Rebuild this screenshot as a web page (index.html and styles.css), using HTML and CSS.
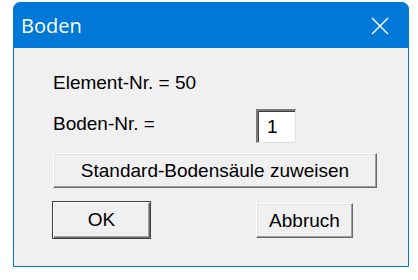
FILE: index.html
```html
<!DOCTYPE html>
<html lang="de">
<head>
  <meta charset="UTF-8">
  <title>Boden</title>
  <link rel="stylesheet" href="styles.css">
</head>
<body>
  <div class="window">
    <div class="title-bar">
      <span class="title">Boden</span>
      <svg class="close-icon" viewBox="0 0 18 18" width="18" height="18">
        <line x1="1" y1="1" x2="17" y2="17" stroke="#fff" stroke-width="1.5"/>
        <line x1="17" y1="1" x2="1" y2="17" stroke="#fff" stroke-width="1.5"/>
      </svg>
    </div>

    <div class="content">
      <div class="info-line">Element-Nr. = 50</div>

      <div class="field-row">
        <span class="field-label">Boden-Nr. =</span>
        <span class="field-input">1</span>
      </div>

      <button class="win-button wide-button">Standard-Bodensäule zuweisen</button>

      <div class="button-row">
        <button class="win-button default-button">OK</button>
        <button class="win-button cancel-button">Abbruch</button>
      </div>
    </div>
  </div>
</body>
</html>
```

FILE: styles.css
```css
body {
  margin: 0;
  padding: 0;
  background: #fff;
  font-family: 'Liberation Sans', Arial, sans-serif;
}

.window {
  margin: 2px 0 0 13px;
  width: 394px;
  border: 1px solid #0078d7;
  border-radius: 7px 7px 0 0;
  background: #0078d7;
}

.title-bar {
  height: 45px;
  display: flex;
  align-items: center;
  justify-content: space-between;
  padding: 0 19px 0 7px;
  border-radius: 7px 7px 0 0;
}

.title {
  font-family: 'Open Sans', 'Noto Sans', sans-serif;
  font-size: 20px;
  color: #fff;
}

.close-icon {
  display: block;
  margin-top: 1px;
}

.content {
  height: 218px;
  box-sizing: border-box;
  background: #f0f0f0;
  padding: 24px 0 0 39px;
  font-size: 19px;
  color: #000;
}

.info-line {
  line-height: 22px;
}

.field-row {
  display: flex;
  align-items: flex-start;
  margin-top: 15px;
  height: 34px;
}

.field-label {
  width: 203px;
  line-height: 22px;
  margin-top: 4px;
}

.field-input {
  width: 40px;
  height: 34px;
  box-sizing: border-box;
  background: #fff;
  border-top: 2px solid #7a7a7a;
  border-left: 2px solid #7a7a7a;
  border-right: 1px solid #e3e3e3;
  border-bottom: 1px solid #e3e3e3;
  box-shadow: inset 1px 1px #404040;
  padding: 5px 0 0 9px;
  line-height: 22px;
}

.win-button {
  display: flex;
  align-items: center;
  justify-content: center;
  box-sizing: border-box;
  padding: 0;
  margin: 0;
  font-family: 'Liberation Sans', Arial, sans-serif;
  font-size: 19px;
  color: #000;
  background: #f0f0f0;
  border-top: 1px solid #fff;
  border-left: 1px solid #fff;
  border-right: 1px solid #696969;
  border-bottom: 1px solid #696969;
  box-shadow: inset -1px -1px #a0a0a0, inset 1px 1px #e3e3e3;
}

.wide-button {
  width: 324px;
  height: 35px;
  margin-top: 10px;
}

.button-row {
  display: flex;
  align-items: flex-start;
  margin-top: 13px;
}

.default-button {
  width: 99px;
  height: 38px;
  margin-left: -1px;
  border: 1px solid #404040;
  box-shadow: inset 1px 1px #fff, inset -1px -1px #696969, inset -2px -2px #a0a0a0;
}

.cancel-button {
  width: 97px;
  height: 35px;
  margin-top: 2px;
  margin-left: 105px;
}
```
